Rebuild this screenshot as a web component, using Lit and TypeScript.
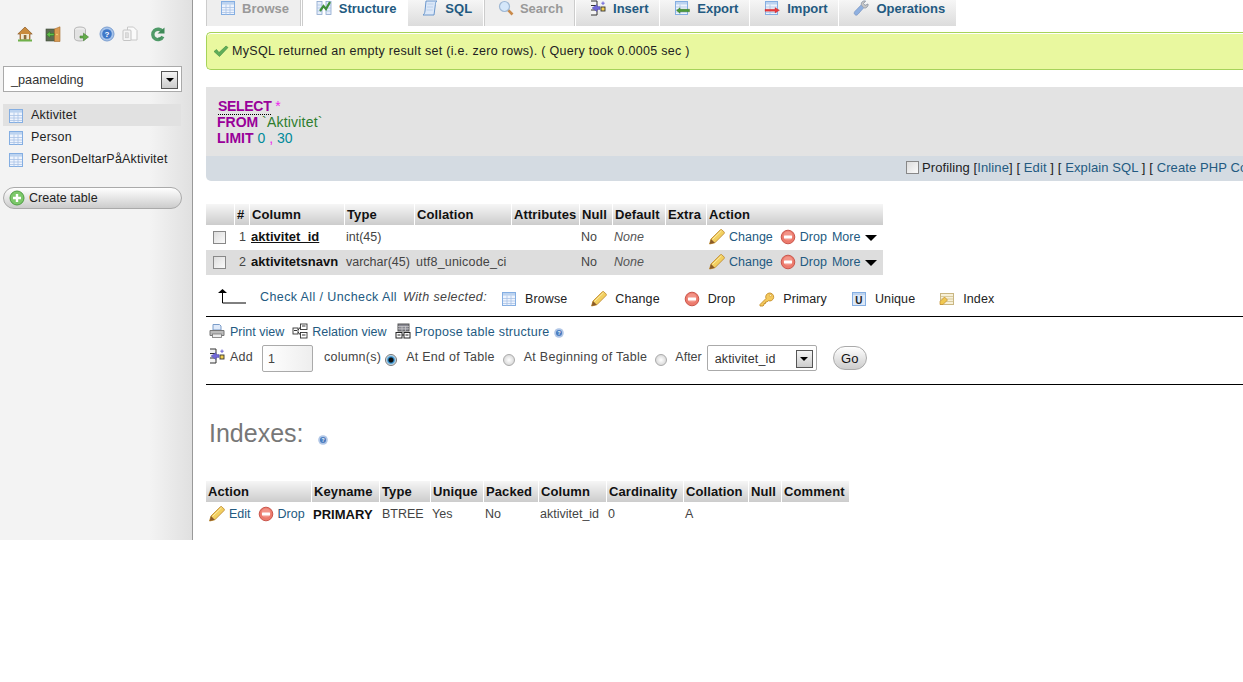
import { LitElement, html, css, svg } from "lit";
import { customElement } from "lit/decorators.js";

const wrap = (c: unknown, size = 16) =>
  html`<svg class="ic" width=${size} height=${size} viewBox="0 0 16 16">${c}</svg>`;

const I: Record<string, () => unknown> = {
  home: () => wrap(svg`<path d="M8 1 .8 8H3v5.500h10V8h2.200z" fill="#c98a3c" stroke="#8a5a28" stroke-width=".7"/><rect x="4" y="8" width="8" height="5.500" fill="#f1e6cf"/><rect x="6.800" y="9" width="2.600" height="4.500" fill="#8a6a3c"/><rect x="1" y="13.500" width="14" height="2" fill="#6fb04a"/>`),
  exit: () => wrap(svg`<rect x="1" y="3" width="9" height="12" fill="#5d6b52" stroke="#3e4a38" stroke-width=".6"/><path d="M9.500 3 15 .8V15.500H9.500z" fill="#d99a52" stroke="#a66c2c" stroke-width=".6"/><circle cx="12" cy="8.500" r=".8" fill="#f6e27a"/><path d="M1.500 8.500 5 5.500v2h4v2H5v2z" fill="#63c04c" stroke="#2f7a22" stroke-width=".5"/>`),
  db: () => wrap(svg`<ellipse cx="7" cy="3.500" rx="5.500" ry="2.500" fill="#eee" stroke="#b5b5b5"/><path d="M1.500 3.500v9c0 1.400 2.500 2.500 5.500 2.500s5.500-1.100 5.500-2.500v-9" fill="#e2e2e2" stroke="#b5b5b5"/><path d="M7 10h3.500V7.200L15.500 11l-5 3.800V12H7z" fill="#63ad4a" stroke="#3f7d2f" stroke-width=".6"/>`),
  help: () => wrap(svg`<circle cx="8" cy="8" r="7" fill="#a8c4ea" stroke="#7c9fd0"/><circle cx="8" cy="8" r="4.800" fill="#3f78c8"/><text x="8" y="11" font-size="8" font-weight="700" text-anchor="middle" fill="#fff" font-family="Liberation Sans">?</text>`),
  docs: () => wrap(svg`<path d="M5.500 1h6l3.500 3.500V14H5.500z" fill="#fafafa" stroke="#c8c8c8"/><rect x="1" y="4" width="8" height="10.500" rx="1" fill="#f4f4f4" stroke="#c4c4c4"/><rect x="3.400" y="6.800" width="3" height="5" fill="#ddd" stroke="#c4c4c4" stroke-width=".5"/>`),
  reload: () => wrap(svg`<path d="M12.500 5.800A5.200 5.200 0 1 0 12.800 10.500" fill="none" stroke="#4f9a68" stroke-width="3.400"/><path d="M7.500 7.500h7V1.500z" fill="#3f8a58"/><path d="M8 11.500h3l-1.500 2.500z" fill="#3f8a58"/>`),
  table: () => wrap(svg`<rect x="1.500" y="1.500" width="13" height="13" fill="#eef4fd" stroke="#84aee2"/><rect x="2" y="2" width="12" height="2.600" fill="#bcd3f0"/><path d="M2 7.500h12M2 10h12M2 12.500h12M6 4.500v10M10 4.500v10" stroke="#a9c3e6" stroke-width=".8"/>`),
  structure: () => wrap(svg`<rect x="1" y="1.500" width="5" height="13" fill="#e6eefa" stroke="#8aa6cc" stroke-width=".8"/><rect x="10" y="1.500" width="5" height="13" fill="#e6eefa" stroke="#8aa6cc" stroke-width=".8"/><path d="M1 5h5M1 8h5M1 11h5M10 5h5M10 8h5M10 11h5" stroke="#a9c3e6" stroke-width=".8"/><path d="m4 11 3.500-5 2.500 3 4-7" fill="none" stroke="#3f8f3a" stroke-width="2.200"/>`),
  sql: () => wrap(svg`<path d="M4 1h11c-1.400 1-1.600 2-1.600 3.500L12 15H1c1.400-.8 1.700-2 2-4z" fill="#dce8f8" stroke="#5f8ec8" stroke-width=".9"/><path d="M5.500 4h6M5 7h6M4.600 10h6" stroke="#b4cce8" stroke-width=".8"/>`),
  search: () => wrap(svg`<path d="m9.500 9.500 5 5" stroke="#c98a4a" stroke-width="2.600"/><circle cx="6.500" cy="6.500" r="5" fill="#d4e7fa" stroke="#9fb8d4" stroke-width="1.200"/>`),
  insert: () => wrap(svg`<path d="M1 1h6v14H1" fill="#f4f4f4" stroke="#333"/><path d="M1 5.500h6M1 10h6" stroke="#333"/><path d="M2 8 7 4.500v2h3v3H7v2z" fill="#7068d8" stroke="#4a44a8" stroke-width=".4"/><rect x="11" y="7" width="4" height="4" fill="#f4d050" stroke="#333" stroke-width=".9"/><path d="M13 1.500v3.500M11.300 3.200h3.400" stroke="#6a62d8" stroke-width="1"/>`),
  exportI: () => wrap(svg`<rect x="1.500" y="1.500" width="12" height="13" fill="#eef4fd" stroke="#84aee2"/><rect x="2" y="2" width="11" height="2.500" fill="#bcd3f0"/><path d="M2 7h11M2 9.500h11M2 12h11M6 4.500V14" stroke="#a9c3e6" stroke-width=".8"/><path d="M2.500 10.500 6 7.800v1.500h9.500v2.400H6v1.500z" fill="#4a9a38" stroke="#2f6f22" stroke-width=".4"/>`),
  importI: () => wrap(svg`<rect x="1.500" y="1.500" width="12" height="13" fill="#eef4fd" stroke="#84aee2"/><rect x="2" y="2" width="11" height="2.500" fill="#bcd3f0"/><path d="M2 7h11M2 12.500h11M6 4.500V14" stroke="#a9c3e6" stroke-width=".8"/><path d="M1 9.300h10V7.600l4.500 2.700L11 13v-1.700H1z" fill="#e8383c" stroke="#b02226" stroke-width=".3"/>`),
  wrench: () => wrap(svg`<path d="M2.500 15C1 14 .8 13 1.800 11.500L8.300 4.800C8 2.500 9.800.5 12.500 1L10.500 3.500l1.500 2 3-1.500c.4 2.600-2 4.500-4.300 3.800L5 14.200c-.8.800-1.600 1.400-2.500.8z" fill="#8fb0e0" stroke="#6d8cbc" stroke-width=".6"/><path d="M8.300 4.800C8 2.500 9.800.5 12.500 1L10.500 3.500l1.500 2 3-1.500c.4 2.600-2 4.500-4.300 3.800z" fill="#c8c8c8" stroke="#909090" stroke-width=".5"/>`),
  check: () => wrap(svg`<path d="m1 8.500 2.500-2 2.500 3L13 3l2 1.500L6.500 13.500z" fill="#5fae5a" stroke="#3f8a3c" stroke-width=".6"/>`),
  pencil: () => wrap(svg`<path d="M.6 15 2 10 11.300 .9c.6-.5 1.200-.5 1.700 0l2 2c.5.500.5 1.100 0 1.700L5.800 13.800z" fill="#f2cf5f" stroke="#c08a2c" stroke-width=".9"/><path d="M.6 15 2 10l3.800 3.800z" fill="#8a5a28"/><path d="M3.500 10.500 12.500 1.800" stroke="#fbeaa8"/>`),
  drop: () => wrap(svg`<circle cx="8" cy="8" r="6.800" fill="#ec7a6c" stroke="#c9564c"/><circle cx="8" cy="7" r="4.600" fill="#f29488"/><rect x="4" y="6.600" width="8" height="2.800" rx=".5" fill="#fff"/>`),
  key: () => wrap(svg`<path d="M1 13.500 7 7.500a4 4 0 1 1 2.200 2.200L8 11H6.500v1.500H5V14l-1 1H1z" fill="#f4c95c" stroke="#c48e2c" stroke-width=".9"/><circle cx="11.500" cy="4.500" r="1.100" fill="#fff2c0" stroke="#c48e2c" stroke-width=".5"/>`),
  unique: () => wrap(svg`<rect x="1.500" y="1.500" width="13" height="13" fill="#dce8f8" stroke="#84aee2"/><rect x="2" y="2" width="12" height="2" fill="#bcd3f0"/><text x="8" y="13" font-size="10" font-weight="700" text-anchor="middle" fill="#222" font-family="Liberation Sans">U</text>`),
  index: () => wrap(svg`<rect x="1.500" y="2.500" width="13" height="11" fill="#f7f0d8" stroke="#c9b682"/><path d="M2 5.500h12M2 8h12M2 10.500h12" stroke="#d8cba0"/><path d="M1 10.500 5.500 6l3 3-4.500 4.500H1z" fill="#f0c850" stroke="#c08a2c" stroke-width=".7"/>`),
  print: () => wrap(svg`<path d="M4 7V1.500h6.500L12 3v4z" fill="#dfeafa" stroke="#7a9cc8"/><path d="M1 7.500h14v5H1z" fill="#bbb" stroke="#777"/><rect x="3.500" y="11" width="9" height="3.500" fill="#eee" stroke="#777" stroke-width=".8"/>`),
  relation: () => wrap(svg`<g fill="#fff" stroke="#333" stroke-width=".9"><rect x="8.500" y="1" width="6.500" height="5.500"/><rect x="8.500" y="9.500" width="6.500" height="5.500"/><rect x="1" y="5" width="5" height="6"/></g><path d="M10 3h3.500M10 12h3.500M2 7.500h3" stroke="#333"/><path d="M6 7 8.500 4M6 9l2.500 3" stroke="#333"/>`),
  propose: () => wrap(svg`<rect x="3" y="1" width="11" height="7" fill="#8a8a94" stroke="#555"/><path d="M3 3.500h11M3 5.800h11M7 3v5M10.500 3v5" stroke="#ccc" stroke-width=".7"/><g fill="#fff" stroke="#222"><rect x="1" y="9.500" width="6" height="5.500"/><rect x="9" y="9.500" width="6" height="5.500"/></g><path d="M2.500 12h3M10.500 12h3M7 12h2" stroke="#222"/>`),
  plus: () => wrap(svg`<circle cx="8" cy="8" r="7" fill="#7cc86a" stroke="#4f9d44"/><path d="M8 4v8M4 8h8" stroke="#fff" stroke-width="2.400"/>`),
  helpSm: () => wrap(svg`<g transform="translate(0 5)"><circle cx="5" cy="5" r="4.800" fill="#b0c6e6"/><circle cx="5" cy="5" r="3" fill="#4a7cc0"/><text x="5" y="7" font-size="5" font-weight="700" text-anchor="middle" fill="#fff" font-family="Liberation Sans">?</text></g>`),
};

const TABS = [
  ["Browse", "table", "off"],
  ["Structure", "structure", "on"],
  ["SQL", "sql", ""],
  ["Search", "search", "off"],
  ["Insert", "insert", ""],
  ["Export", "exportI", ""],
  ["Import", "importI", ""],
  ["Operations", "wrench", ""],
];

const FIELD_HEAD = ["", "#", "Column", "Type", "Collation", "Attributes", "Null", "Default", "Extra", "Action"];
const FIELDS = [
  ["1", "aktivitet_id", "int(45)", ""],
  ["2", "aktivitetsnavn", "varchar(45)", "utf8_unicode_ci"],
];
const BULK = [
  ["Browse", "table"],
  ["Change", "pencil"],
  ["Drop", "drop"],
  ["Primary", "key"],
  ["Unique", "unique"],
  ["Index", "index"],
];
const INDEX_HEAD = ["Action", "Keyname", "Type", "Unique", "Packed", "Column", "Cardinality", "Collation", "Null", "Comment"];

@customElement("app-root")
export class AppRoot extends LitElement {
  static styles = css`
    :host { display: block; width: 1243px; height: 682px; background: #fff; overflow: hidden;
      font-family: "Liberation Sans", Arial, sans-serif; font-size: 12.5px; color: #444; }
    * { box-sizing: border-box; }
    a { color: #235a81; text-decoration: none; }
    .ic { display: block; flex: none; }
    .page { display: flex; height: 540px; }
    .side { flex: none; width: 193px; height: 540px; border-right: 1px solid #999;
      background: linear-gradient(to right, #f3f3f3 0, #f3f3f3 150px, #e0e0e0 192px); padding: 26px 10px 0 3px; }
    .tools { display: flex; height: 16px; margin-left: 14px; }
    .tools .ic:nth-child(2), .tools .ic:nth-child(3) { margin-left: 12px; }
    .tools .ic:nth-child(4) { margin-left: 10px; }
    .tools .ic:nth-child(5) { margin-left: 7px; }
    .tools .ic:nth-child(6) { margin-left: 12px; }
    .dbsel { display: flex; align-items: center; justify-content: space-between; width: 179px; height: 26px;
      margin-top: 24px; border: 1px solid #aaa; background: #fff; padding: 1px 3px 0 7px; color: #333; font-size: 12.7px; }
    .arrowbtn { width: 17px; height: 18px; border: 1px solid #555; background: linear-gradient(#f4f4f4, #ccc);
      display: flex; align-items: center; justify-content: center; }
    .arrowbtn::after { content: ""; border: 4px solid transparent; border-top: 4px solid #000; border-bottom: 0; }
    .tlist { margin-top: 12px; }
    .tlist a { display: flex; align-items: center; gap: 7px; height: 22px; padding-left: 5px; color: #222; width: 178px; letter-spacing: .2px; }
    .tlist a.cur { background: #e1e1e1; }
    .tlist .ic { margin-top: 2px; }
    .create { display: flex; align-items: center; gap: 4px; width: 179px; height: 22px; margin-top: 17px; padding-left: 5px;
      border: 1px solid #aaa; border-radius: 11px; background: linear-gradient(#fff, #ccc); color: #222; letter-spacing: .05px; }
    .main { flex: none; width: 1050px; padding-left: 13px; overflow: hidden; }
    .wide { width: 1100px; }
    .tabs { display: flex; height: 26px; gap: 1px; }
    .tab { display: flex; align-items: center; gap: 7px; height: 26px; padding: 0 10.8px 10px 14px; font-weight: 700; font-size: 13px;
      color: #235a81; background: linear-gradient(#f6f6f6, #dcdcdc); white-space: nowrap; }
    .tab.off { color: #999; background: #eee; border-left: 1px solid #ccc; border-right: 1px solid #ccc; padding-left: 13px; gap: 6px; }
    .tab.on { background: #fff; padding-left: 13px; border-left: 1px solid #ccc; }
    .ok { display: flex; align-items: center; gap: 3px; height: 38px; margin-top: 6px; padding-left: 6px; border: 1px solid #a6d35a;
      border-right: 0; border-radius: 5px 0 0 5px; background: #e9f89f; color: #222; box-shadow: inset 0 1px 0 #fff; white-space: nowrap; letter-spacing: .3px; }
    .sql { margin-top: 17px; height: 69px; background: #e3e3e3; padding: 11px 0 0 11px; font-size: 14px; line-height: 16px; color: #2e7d2e; }
    .sql .tb { letter-spacing: .2px; }
    .kw { font-weight: 700; color: #990099; }
    .kw.u { border-bottom: 1px dotted #000; margin-left: 1px; letter-spacing: -.3px; }
    .pk { color: #ee22ee; }
    .num { color: #008a9a; }
    .prof { display: flex; align-items: center; height: 25px; background: #d4dbe2; padding: 0 0 2px 700px; gap: 3px; border-radius: 0 0 0 5px;
      white-space: nowrap; color: #222; font-size: 13px; letter-spacing: .1px; }
    .prof input { margin: 3px 0 0; }
    input[type="checkbox"] { appearance: none; width: 13px; height: 13px; margin: 0; border: 1px solid #888; background: linear-gradient(135deg, #ddd, #fafafa); flex: none; }
    input[type="radio"] { appearance: none; width: 12px; height: 12px; margin: 0; border-radius: 50%; border: 1px solid #aaa; background: radial-gradient(#fff, #ccc); flex: none; }
    input[type="radio"]:checked { border-color: #777; background: radial-gradient(circle, #111 0 2px, #2a8ac8 3px, #e4eef6 5px); }
    .grid { display: grid; font-size: 12.5px; }
    .g1 { margin-top: 23px; width: 677px; grid-template-columns: 28px 15px 95px 70px 97px 68px 33px 53px 41px 177px; }
    .g2 { width: 643px; grid-template-columns: 105px 68px 51px 53px 55px 68px 77px 65px 33px 68px; margin-top: 27px; }
    .th { height: 21px; display: flex; align-items: center; padding: 0 0 0 2px; font-weight: 700; color: #111; font-size: 13px; letter-spacing: .1px;
      background: linear-gradient(#f6f6f6, #ccc); white-space: nowrap; overflow: hidden; border-left: 1px solid #fff; }
    .th:first-child { border-left: 0; }
    .td { height: 25px; display: flex; align-items: center; padding-left: 2px; white-space: nowrap; overflow: hidden; color: #444; }
    .g1 .td { padding-bottom: 2px; }
    .g2 .td { height: 24px; }
    .td.even { background: #ddd; }
    .td.c { padding-left: 7px; padding-bottom: 0; }
    .td.r { justify-content: flex-end; padding-right: 3px; padding-left: 0; }
    .td.p3 { padding-left: 3px; }
    .td.sp { letter-spacing: .2px; }
    .td b { color: #111; font-size: 13px; letter-spacing: .03px; }
    .td b.u { text-decoration: underline; }
    .td i { color: #555; }
    .acts { display: flex; align-items: center; gap: 4px; }
    .acts a.t { margin-right: 3px; }
    .acts a.m { margin-left: -2px; }
    .acts .down { width: 0; height: 0; border: 6px solid transparent; border-top: 6px solid #000; border-bottom: 0; margin: 2px 0 0 1px; }
    .bulk { display: flex; align-items: center; height: 41px; padding: 3px 0 0 12px; letter-spacing: .4px; }
    .bulk .arr { margin: -2px 14px 0 0; }
    .bulk a.all { margin-right: 6px; }
    .bulk .acts2 { display: flex; gap: 24px; margin: 3px 0 0 14px; letter-spacing: .1px; }
    .bulk .it { display: flex; gap: 8px; align-items: center; color: #222; }
    .rule { height: 1px; background: #000; }
    .links { display: flex; align-items: center; height: 26px; padding: 2px 0 0 3px; gap: 4px; margin-top: 1px; }
    .links a { margin-right: 4px; }
    .links a.l1 { margin-left: 1px; }
    .links a.l2 { margin-right: 0; letter-spacing: .25px; }
    .links .ic { margin-top: -2px; }
    .addr { display: flex; align-items: flex-start; height: 39px; padding: 0 0 0 3px; margin-top: 1px; }
    .addr > .ic { margin-top: 3px; }
    .addr .tx { margin-top: 4px; line-height: 16px; color: #444; white-space: nowrap; letter-spacing: .25px; }
    .addr .add { margin-left: 5px; }
    .addr .cols { margin-right: 4px; }
    .addr .opt { margin: 4px 8px 0 9px; letter-spacing: .27px; }
    .addr .aft { margin-left: 8px; letter-spacing: 0; }
    .addr input[type="radio"] { margin-top: 9px; }
    .num-in { width: 51px; height: 27px; border: 1px solid #aaa; border-radius: 2px; background: linear-gradient(to right, #fff, #eee); margin: 0 11px 0 9px;
      padding: 5px 0 0 5px; color: #444; line-height: 16px; }
    .fsel { display: flex; align-items: center; justify-content: space-between; width: 110px; height: 26px; border: 1px solid #aaa; border-radius: 2px; padding: 1px 3px 0 7px; margin-left: 5px; color: #333; letter-spacing: .15px; }
    .go { display: flex; align-items: center; justify-content: center; width: 34px; height: 24px; margin: 1px 0 0 16px; border: 1px solid #aaa; border-radius: 12px; background: linear-gradient(#fff, #ccc); color: #111; font-size: 13px; }
    .idx { display: flex; align-items: flex-start; gap: 14px; margin: 33px 0 0 3px; font-size: 25px; line-height: 30px; color: #777; font-weight: 400; height: 36px; }
    .idx .ic { margin-top: 12px; }
  `;

  private acts(edit: string, more: boolean) {
    return html`<div class="acts">${I.pencil()}<a class="t" href="#">${edit}</a>${I.drop()}<a class="t" href="#">Drop</a>${more
      ? html`<a class="m" href="#">More</a><span class="down"></span>`
      : ""}</div>`;
  }

  render() {
    return html`<div class="page">
      <aside class="side">
        <div class="tools">${I.home()}${I.exit()}${I.db()}${I.help()}${I.docs()}${I.reload()}</div>
        <div class="dbsel"><span>_paamelding</span><span class="arrowbtn"></span></div>
        <nav class="tlist">
          <a class="cur" href="#">${I.table()}Aktivitet</a>
          <a href="#">${I.table()}Person</a>
          <a href="#">${I.table()}PersonDeltarPåAktivitet</a>
        </nav>
        <div class="create">${I.plus()}<span>Create table</span></div>
      </aside>
      <main class="main"><div class="wide">
        <div class="tabs">
          ${TABS.map(([t, ic, c]) => html`<a class="tab ${c}" href="#">${I[ic]()}<span>${t}</span></a>`)}
        </div>
        <div class="ok">${I.check()}<span>MySQL returned an empty result set (i.e. zero rows). ( Query took 0.0005 sec )</span></div>
        <div class="sql">
          <div><span class="kw u">SELECT</span> <span class="pk">*</span></div>
          <div><span class="kw">FROM</span> <span class="tb">\`Aktivitet\`</span></div>
          <div><span class="kw">LIMIT</span> <span class="num">0</span> <span class="pk">,</span> <span class="num">30</span></div>
        </div>
        <div class="prof">
          <input type="checkbox" /><span>Profiling [<a href="#">Inline</a>] [ <a href="#">Edit</a> ] [ <a href="#">Explain SQL</a> ] [ <a href="#">Create PHP Code</a> ]</span>
        </div>

        <div class="grid g1">
          ${FIELD_HEAD.map((h) => html`<div class="th">${h}</div>`)}
          ${FIELDS.map(([n, name, type, coll], i) => {
            const e = i % 2 ? "even" : "";
            return html`
              <div class="td c ${e}"><input type="checkbox" /></div>
              <div class="td r ${e}">${n}</div>
              <div class="td ${e}"><b class=${i ? "" : "u"}>${name}</b></div>
              <div class="td ${e}">${type}</div>
              <div class="td sp ${e}">${coll}</div>
              <div class="td ${e}"></div>
              <div class="td ${e}">No</div>
              <div class="td ${e}"><i>None</i></div>
              <div class="td ${e}"></div>
              <div class="td p3 ${e}">${this.acts("Change", true)}</div>`;
          })}
        </div>

        <div class="bulk">
          <svg class="ic arr" width="28" height="16" viewBox="0 0 28 16"><path d="M4.500 15H28M4.500 15V4" stroke="#000" fill="none"/><path d="M0 5 4.500 1 9 5z" fill="#000"/></svg>
          <a class="all" href="#">Check All / Uncheck All</a><em>With selected:</em>
          <div class="acts2">${BULK.map(([t, ic]) => html`<span class="it">${I[ic]()}${t}</span>`)}</div>
        </div>
        <div class="rule"></div>
        <div class="links">
          ${I.print()}<a class="l1" href="#">Print view</a>${I.relation()}<a href="#">Relation view</a>${I.propose()}<a class="l2" href="#">Propose table structure</a>${I.helpSm()}
        </div>
        <div class="addr">
          ${I.insert()}<span class="tx add">Add</span>
          <div class="num-in">1</div>
          <span class="tx cols">column(s)</span><input type="radio" name="p" checked />
          <span class="tx opt">At End of Table</span><input type="radio" name="p" />
          <span class="tx opt">At Beginning of Table</span><input type="radio" name="p" />
          <span class="tx aft">After</span>
          <div class="fsel"><span>aktivitet_id</span><span class="arrowbtn"></span></div>
          <div class="go">Go</div>
        </div>
        <div class="rule"></div>

        <h2 class="idx"><span>Indexes:</span>${I.helpSm()}</h2>
        <div class="grid g2">
          ${INDEX_HEAD.map((h) => html`<div class="th">${h}</div>`)}
          <div class="td p3">${this.acts("Edit", false)}</div>
          <div class="td"><b>PRIMARY</b></div>
          <div class="td p3">BTREE</div>
          <div class="td">Yes</div>
          <div class="td">No</div>
          <div class="td">aktivitet_id</div>
          <div class="td">0</div>
          <div class="td">A</div>
          <div class="td"></div>
          <div class="td"></div>
        </div>
      </div></main>
    </div>`;
  }
}
